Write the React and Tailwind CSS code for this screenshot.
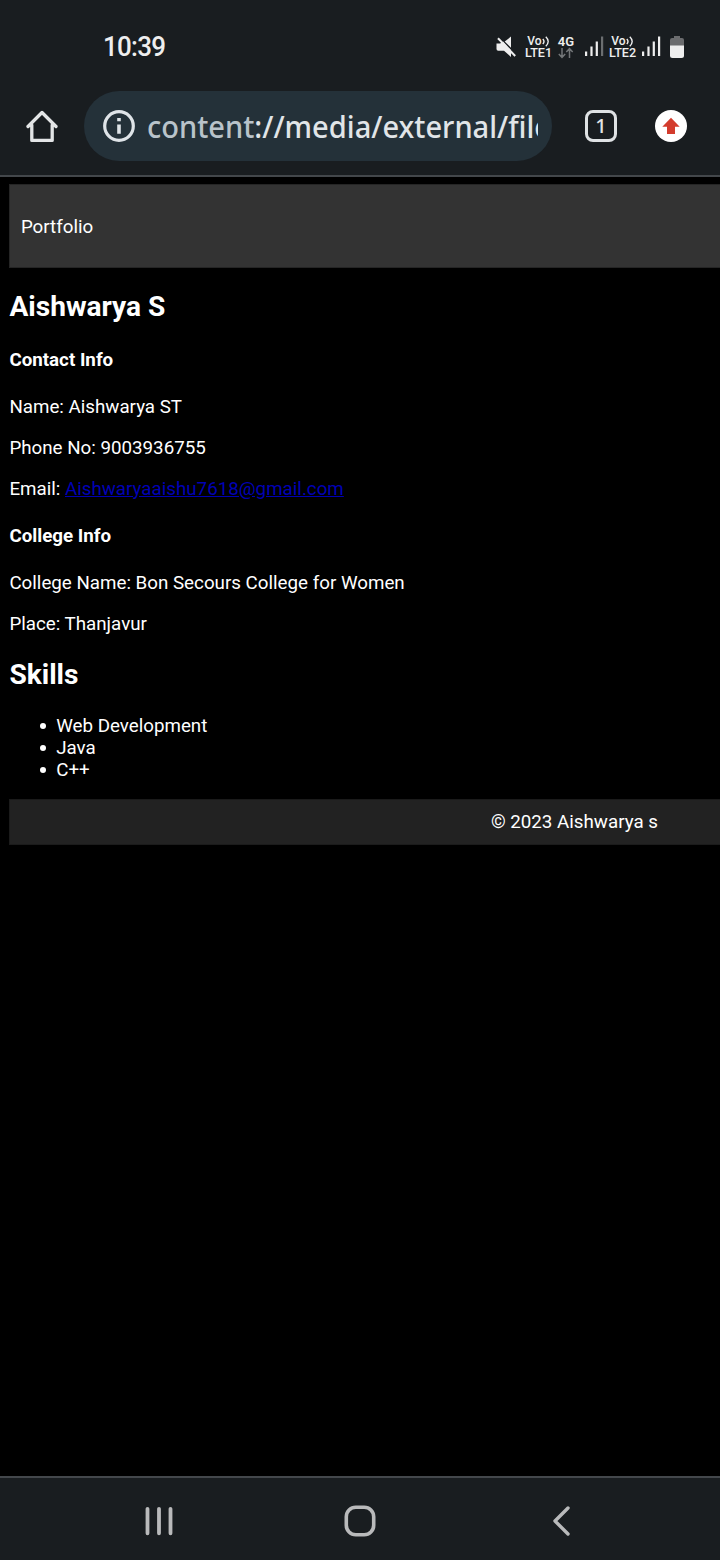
function MutedIcon() {
  return (
    <svg className="h-[22px] w-[22px]" viewBox="0 0 22 22" fill="none">
      <path d="M0.5 7.5h3.6l3-2L15 14v7l-7-6.2H2.2Q.5 14.800.5 13z" fill="#eeeeee" />
      <path d="M8.700 5.600L15 .600v11.200z" fill="#eeeeee" />
      <path d="M2 2.200L19.200 20" stroke="#eeeeee" strokeWidth="2" />
    </svg>
  );
}

function VoLte({ n }) {
  return (
    <div className="flex h-[23px] w-[27px] flex-col items-center font-medium text-[#eeeeee]">
      <span className="flex h-[11px] items-center text-[12px] leading-[11px]">
        Vo
        <svg className="h-[11px] w-[8px]" viewBox="0 0 8 11" fill="none" stroke="#eeeeee" strokeWidth="1.4">
          <path d="M.8 3Q3.200 5.500.8 8M3.800 .800Q8.600 5.500 3.800 10.200" />
        </svg>
      </span>
      <span className="h-[12px] text-[12.600px] leading-[12px] whitespace-nowrap">LTE{n}</span>
    </div>
  );
}

function Signal({ last }) {
  return (
    <svg className="h-[20px] w-[19px]" viewBox="0 0 19 20">
      <path d="M0 15.500h2.200V20H0zM5.400 10.500h2.200V20H5.400zM10.700 5.500h2.200V20h-2.200z" fill="#eeeeee" />
      <path d="M16 .5h2.200V20H16z" fill={last} />
    </svg>
  );
}

function StatusBar() {
  return (
    <div className="flex h-[91px] shrink-0 items-start pl-[103px] text-[#eeeeee]">
      <div className="mt-[31px] w-[393px] text-[27px] leading-[32px] font-medium">
        <div className="origin-left scale-x-[0.96] tracking-[-0.700px]">10:39</div>
      </div>
      <div className="mt-[36px] flex h-[24px] w-[224px] items-start">
        <MutedIcon />
        <div className="ml-[7px]"><VoLte n="1" /></div>
        <div className="ml-[5px] flex w-[18px] flex-col items-center">
          <span className="h-[11px] text-[13px] leading-[12px] font-semibold">4G</span>
          <svg className="h-[12px] w-[16px]" viewBox="0 0 16 12" fill="none" stroke="#737678" strokeWidth="1.500">
            <path d="M4 1v9M.8 7L4 10.300 7.200 7M11.500 11V2M8.300 5l3.200-3.300L14.700 5" />
          </svg>
        </div>
        <div className="ml-[10px]"><Signal last="#6b6e70" /></div>
        <div className="ml-[5px]"><VoLte n="2" /></div>
        <div className="ml-[6px]"><Signal last="#eeeeee" /></div>
        <svg className="ml-[9px] h-[22px] w-[14px]" viewBox="0 0 14 22">
          <path d="M4 0h6v2h2q2 0 2 2v6H0V4q0-2 2-2h2z" fill="#6b6c6e" />
          <path d="M0 9.500h14V19.500q0 2.500-2.500 2.500h-9Q0 22 0 19.500z" fill="#eeeeee" />
        </svg>
      </div>
    </div>
  );
}

function AddressBar() {
  return (
    <div className="flex h-[86px] shrink-0 items-start border-b-2 border-[#43474b] pl-[26px]">
      <svg className="mt-[18px] h-[34px] w-[32px]" viewBox="0 0 32 34" fill="none" stroke="#e3e5e6" strokeWidth="3.300" strokeLinecap="round" strokeLinejoin="round">
        <path d="M2 17.500L16 3.500l14 14M5.800 16v15.400h20.400V16" />
      </svg>
      <div className="ml-[26px] flex h-[70px] w-[468px] items-center rounded-full bg-[#243139] pl-[19px]">
        <svg className="h-[32px] w-[32px] shrink-0" viewBox="0 0 32 32">
          <circle cx="16" cy="16" r="14.300" fill="none" stroke="#dfe4e8" strokeWidth="3.200" />
          <path d="M14.200 8h3.600v3.300h-3.600zM14.200 14.500h3.600v9.300h-3.600z" fill="#dfe4e8" />
        </svg>
        <div className="ml-[12px] w-[391px] overflow-hidden">
          <div className="origin-left scale-x-[0.922] font-['Noto_Sans'] text-[31.500px] leading-[44px] font-medium whitespace-nowrap text-[#e1e5e8]">
            <span className="text-[#b9c3ca]">content</span>://media/external/file
          </div>
        </div>
      </div>
      <div className="mt-[19px] ml-[33px] flex h-[32px] w-[32px] items-center justify-center rounded-[8px] border-[3.500px] border-[#dfe2e4] font-['Noto_Sans'] text-[20px] leading-none font-medium text-[#e3e5e6]">
        1
      </div>
      <svg className="mt-[19px] ml-[38px] h-[32px] w-[32px]" viewBox="0 0 32 32">
        <circle cx="16" cy="16" r="16" fill="#ffffff" />
        <path d="M16 7.800L24.700 16.700H20V24h-8V16.700H7.300z" fill="#d33c2d" />
      </svg>
    </div>
  );
}

function Skill({ children }) {
  return (
    <li className="flex items-center">
      <span className="mr-[10px] h-[6.500px] w-[6.500px] rounded-full bg-white" />
      {children}
    </li>
  );
}

function Page() {
  return (
    <main className="flex-1 overflow-hidden bg-black pt-[7px] pl-[9.375px] text-[18.750px] leading-[22px] text-white">
      <header className="flex h-[84px] items-center border border-r-0 border-[#252525] bg-[#333333] pt-px pl-[10.500px]">Portfolio</header>
      <h2 className="mt-[22px] text-[28.125px] leading-[33px] font-bold">Aishwarya S</h2>
      <h4 className="mt-[26px] font-bold">Contact Info</h4>
      <p className="mt-[25px]">Name: Aishwarya ST</p>
      <p className="mt-[19px]">Phone No: 9003936755</p>
      <p className="mt-[19px]">
        Email: <a className="text-[#0000b4] underline" href="mailto:Aishwaryaaishu7618@gmail.com">Aishwaryaaishu7618@gmail.com</a>
      </p>
      <h4 className="mt-[25px] font-bold">College Info</h4>
      <p className="mt-[25px]">College Name: Bon Secours College for Women</p>
      <p className="mt-[19px]">Place: Thanjavur</p>
      <h2 className="mt-[23px] text-[28.125px] leading-[33px] font-bold">Skills</h2>
      <ul className="mt-[24px] pl-[30.300px]">
        <Skill>Web Development</Skill>
        <Skill>Java</Skill>
        <Skill>C++</Skill>
      </ul>
      <footer className="mt-[18px] flex h-[46px] items-center border border-r-0 border-[#1b1b1b] bg-[#222222] pl-[480.500px]">© 2023 Aishwarya s</footer>
    </main>
  );
}

function NavBar() {
  return (
    <nav className="flex h-[84px] shrink-0 items-start border-t-2 border-[#43474b] pt-[27px] pl-[145px]">
      <svg className="h-[32px] w-[28px]" viewBox="0 0 28 32" stroke="#b9babb" strokeWidth="3.800" strokeLinecap="round">
        <path d="M2.500 3.800v24.500M14 3.800v24.500M25.500 3.800v24.500" />
      </svg>
      <svg className="ml-[171px] h-[32px] w-[32px]" viewBox="0 0 32 32" fill="none" stroke="#b9babb" strokeWidth="3.600">
        <rect x="2.300" y="2.300" width="27.400" height="27.400" rx="9.500" />
      </svg>
      <svg className="ml-[175px] h-[32px] w-[20px]" viewBox="0 0 20 32" fill="none" stroke="#b9babb" strokeWidth="3.400" strokeLinecap="round" strokeLinejoin="round">
        <path d="M17 3L4 16l13 13" />
      </svg>
    </nav>
  );
}

export default function App() {
  return (
    <div className="flex h-[1560px] w-[720px] flex-col overflow-hidden bg-[#191d20] font-[Roboto,sans-serif]">
      <StatusBar />
      <AddressBar />
      <Page />
      <NavBar />
    </div>
  );
}
